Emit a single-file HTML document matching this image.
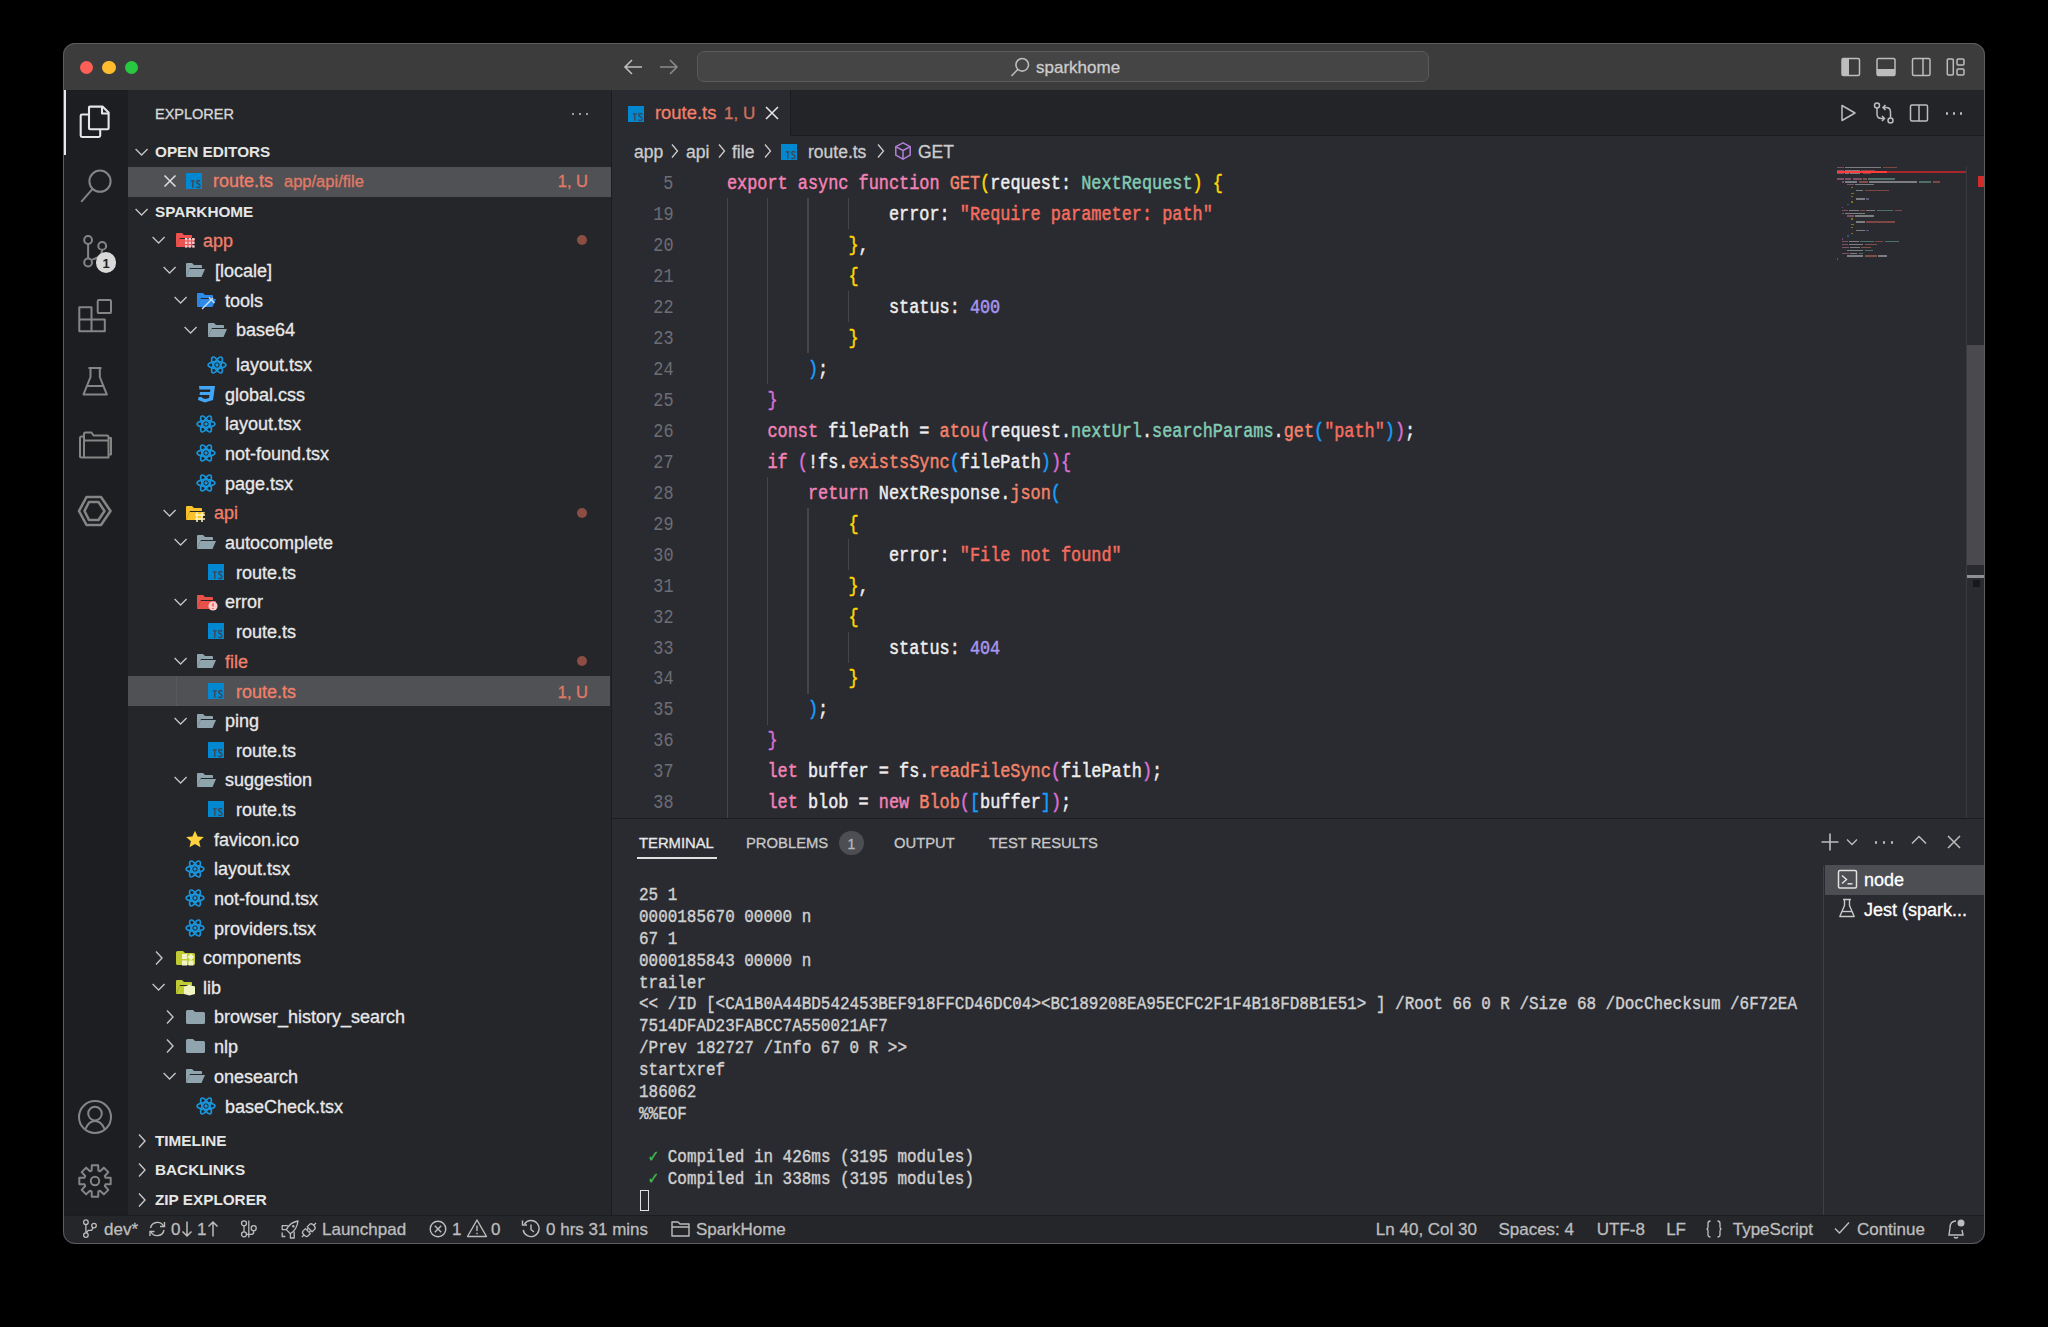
<!DOCTYPE html><html><head><meta charset="utf-8"><style>
html,body{margin:0;padding:0;background:#000;width:2048px;height:1327px;overflow:hidden;position:relative;}
*{box-sizing:border-box;}
</style></head><body>

<div style="position:absolute;left:63px;top:43px;width:1922px;height:1201px;border-radius:12px;background:#2a2b31;overflow:hidden;">
<div style="position:absolute;left:-63px;top:-43px;width:2048px;height:1327px;">
<div style="position:absolute;left:63px;top:43px;width:1922px;height:47px;background:#3c3c3c;"></div>
<div style="position:absolute;left:79.7px;top:60.5px;width:13.6px;height:13.6px;border-radius:50%;background:#fe5f57"></div>
<div style="position:absolute;left:102.2px;top:60.5px;width:13.6px;height:13.6px;border-radius:50%;background:#febc2e"></div>
<div style="position:absolute;left:124.7px;top:60.5px;width:13.6px;height:13.6px;border-radius:50%;background:#28c840"></div>
<div style="position:absolute;left:63px;top:90px;width:65px;height:1125px;background:#1d1e22;"></div>
<div style="position:absolute;left:128px;top:90px;width:483px;height:1125px;background:#25262a;"></div>
<div style="position:absolute;left:611px;top:90px;width:1px;height:1125px;background:#1b1c1f;"></div>
<div style="position:absolute;left:612px;top:90px;width:1373px;height:46px;background:#232428;"></div>
<div style="position:absolute;left:791px;top:135px;width:1194px;height:1px;background:#1b1c1f;"></div>
<div style="position:absolute;left:612px;top:90px;width:179px;height:46px;background:#2a2b31;"></div>
<div style="position:absolute;left:790px;top:90px;width:1px;height:46px;background:#1b1c1f;"></div>
<div style="position:absolute;left:612px;top:136px;width:1373px;height:682px;background:#2a2b31;"></div>
<div style="position:absolute;left:612px;top:818px;width:1373px;height:1px;background:#1b1c1f;"></div>
<div style="position:absolute;left:612px;top:819px;width:1373px;height:396px;background:#2a2b31;"></div>
<div style="position:absolute;left:63px;top:1215px;width:1922px;height:1px;background:#1b1c1f;"></div>
<div style="position:absolute;left:63px;top:1216px;width:1922px;height:28px;background:#25262a;"></div>
<div style="position:absolute;left:155px;top:107.23px;font:400 14.5px/14.5px 'Liberation Sans', sans-serif;color:#d8d8d8;white-space:pre;-webkit-text-stroke:0.3px currentColor;">EXPLORER</div>
<div style="position:absolute;left:571.7px;top:112.5px;width:2.6px;height:2.6px;background:#c5c5c5;border-radius:50%"></div>
<div style="position:absolute;left:578.7px;top:112.5px;width:2.6px;height:2.6px;background:#c5c5c5;border-radius:50%"></div>
<div style="position:absolute;left:585.7px;top:112.5px;width:2.6px;height:2.6px;background:#c5c5c5;border-radius:50%"></div>
<svg style="position:absolute;left:135px;top:146.7px;" width="15" height="10" viewBox="0 0 15 10"><path d="M0.6 2 L6.6 8 L12.6 2" fill="none" stroke="#c5c5c5" stroke-width="1.3"/></svg>
<div style="position:absolute;left:155px;top:143.85px;font:700 15.3px/15.3px 'Liberation Sans', sans-serif;color:#e6e6e6;white-space:pre;">OPEN EDITORS</div>
<div style="position:absolute;left:128px;top:167px;width:483px;height:29.5px;background:#505155;"></div>
<svg style="position:absolute;left:163px;top:174px;" width="14" height="14" viewBox="0 0 14 14"><path d="M1.5 1.5 L12.5 12.5 M12.5 1.5 L1.5 12.5" stroke="#e0e0e0" stroke-width="1.5"/></svg>
<svg style="position:absolute;left:186px;top:173.0px;" width="16" height="16" viewBox="0 0 16 16"><rect x="0" y="0" width="16" height="16" fill="#0288d1"/><g fill="none" stroke="#3f464f" stroke-width="1.35"><path d="M4.9 7.8 H8.7 M6.8 7.8 V14.7"/><path d="M14.2 8.4 Q12.9 7.2 11.5 7.7 Q10.1 8.4 11.1 9.9 L13.3 11.4 Q14.6 12.6 13.8 13.9 Q12.4 15.1 10.3 13.9"/></g></svg>
<div style="position:absolute;left:213px;top:171.76px;font:400 18px/18px 'Liberation Sans', sans-serif;color:#f0806a;white-space:pre;-webkit-text-stroke:0.3px currentColor;">route.ts</div>
<div style="position:absolute;left:284px;top:173.03px;font:400 16.5px/16.5px 'Liberation Sans', sans-serif;color:#e07a66;white-space:pre;-webkit-text-stroke:0.3px currentColor;">app/api/file</div>
<div style="position:absolute;right:1460px;top:173.03px;font:400 16.5px/16.5px 'Liberation Sans', sans-serif;color:#e07a66;white-space:pre;-webkit-text-stroke:0.3px currentColor;">1, U</div>
<svg style="position:absolute;left:135px;top:206.7px;" width="15" height="10" viewBox="0 0 15 10"><path d="M0.6 2 L6.6 8 L12.6 2" fill="none" stroke="#c5c5c5" stroke-width="1.3"/></svg>
<div style="position:absolute;left:155px;top:203.85px;font:700 15.3px/15.3px 'Liberation Sans', sans-serif;color:#e6e6e6;white-space:pre;">SPARKHOME</div>
<svg style="position:absolute;left:152px;top:235px;" width="15" height="10" viewBox="0 0 15 10"><path d="M0.6 2 L6.6 8 L12.6 2" fill="none" stroke="#c5c5c5" stroke-width="1.3"/></svg>
<svg style="position:absolute;left:175px;top:232px;" width="21" height="16" viewBox="0 0 21 16"><path d="M1 2 Q1 1 2 1 H7 L9 3 H16 Q17 3 17 4 V6 H5 L1 15 Z" fill="#ef5350"/><path d="M4.5 7 H20 L16.5 15 H1 Z" fill="#ef5350"/></svg>
<svg style="position:absolute;left:184px;top:237px;" width="12" height="11" viewBox="0 0 12 11"><g fill="#ffcdd2"><rect x="1.0" y="1.0" width="2.4" height="2.4"/><rect x="1.0" y="4.6" width="2.4" height="2.4"/><rect x="1.0" y="8.2" width="2.4" height="2.4"/><rect x="4.6" y="1.0" width="2.4" height="2.4"/><rect x="4.6" y="4.6" width="2.4" height="2.4"/><rect x="4.6" y="8.2" width="2.4" height="2.4"/><rect x="8.2" y="1.0" width="2.4" height="2.4"/><rect x="8.2" y="4.6" width="2.4" height="2.4"/><rect x="8.2" y="8.2" width="2.4" height="2.4"/></g></svg>
<div style="position:absolute;left:203px;top:231.56px;font:400 18px/18px 'Liberation Sans', sans-serif;color:#f0806a;white-space:pre;-webkit-text-stroke:0.3px currentColor;">app</div>
<div style="position:absolute;left:577px;top:235px;width:10px;height:10px;background:#8c4d43;border-radius:50%"></div>
<svg style="position:absolute;left:163px;top:265px;" width="15" height="10" viewBox="0 0 15 10"><path d="M0.6 2 L6.6 8 L12.6 2" fill="none" stroke="#c5c5c5" stroke-width="1.3"/></svg>
<svg style="position:absolute;left:185px;top:262px;" width="21" height="16" viewBox="0 0 21 16"><path d="M1 2 Q1 1 2 1 H7 L9 3 H16 Q17 3 17 4 V6 H5 L1 15 Z" fill="#90a4ae"/><path d="M4.5 7 H20 L16.5 15 H1 Z" fill="#90a4ae"/></svg>
<div style="position:absolute;left:215px;top:261.56px;font:400 18px/18px 'Liberation Sans', sans-serif;color:#e8e8e8;white-space:pre;-webkit-text-stroke:0.3px currentColor;">[locale]</div>
<svg style="position:absolute;left:174px;top:295px;" width="15" height="10" viewBox="0 0 15 10"><path d="M0.6 2 L6.6 8 L12.6 2" fill="none" stroke="#c5c5c5" stroke-width="1.3"/></svg>
<svg style="position:absolute;left:196px;top:292px;" width="21" height="16" viewBox="0 0 21 16"><path d="M1 2 Q1 1 2 1 H7 L9 3 H16 Q17 3 17 4 V6 H5 L1 15 Z" fill="#2d8ae8"/><path d="M4.5 7 H20 L16.5 15 H1 Z" fill="#2d8ae8"/></svg>
<svg style="position:absolute;left:200px;top:296px;" width="16" height="14" viewBox="0 0 16 14"><path d="M2 13 L13 2 M9 1.5 L14.5 7" stroke="#cfe3f5" stroke-width="1.4" fill="none"/></svg>
<div style="position:absolute;left:225px;top:291.56px;font:400 18px/18px 'Liberation Sans', sans-serif;color:#e8e8e8;white-space:pre;-webkit-text-stroke:0.3px currentColor;">tools</div>
<svg style="position:absolute;left:184px;top:324.5px;" width="15" height="10" viewBox="0 0 15 10"><path d="M0.6 2 L6.6 8 L12.6 2" fill="none" stroke="#c5c5c5" stroke-width="1.3"/></svg>
<svg style="position:absolute;left:207px;top:321.5px;" width="21" height="16" viewBox="0 0 21 16"><path d="M1 2 Q1 1 2 1 H7 L9 3 H16 Q17 3 17 4 V6 H5 L1 15 Z" fill="#90a4ae"/><path d="M4.5 7 H20 L16.5 15 H1 Z" fill="#90a4ae"/></svg>
<div style="position:absolute;left:236px;top:321.06px;font:400 18px/18px 'Liberation Sans', sans-serif;color:#e8e8e8;white-space:pre;-webkit-text-stroke:0.3px currentColor;">base64</div>
<svg style="position:absolute;left:207px;top:355.5px;" width="20" height="18" viewBox="0 0 20 18"><g fill="none" stroke="#1a95dc" stroke-width="1.7"><ellipse cx="10" cy="9" rx="9" ry="3.4"/><ellipse cx="10" cy="9" rx="9" ry="3.4" transform="rotate(60 10 9)"/><ellipse cx="10" cy="9" rx="9" ry="3.4" transform="rotate(120 10 9)"/></g><circle cx="10" cy="9" r="1.7" fill="#1a95dc"/></svg>
<div style="position:absolute;left:236px;top:356.06px;font:400 18px/18px 'Liberation Sans', sans-serif;color:#e8e8e8;white-space:pre;-webkit-text-stroke:0.3px currentColor;">layout.tsx</div>
<svg style="position:absolute;left:196px;top:385px;" width="20" height="18" viewBox="0 0 20 18"><path d="M3 1 H19 L17 15 L9 17.5 L2 15 L2.6 12 H6 L6 13 L9.5 14 L13 13 L13.5 10 H3.5 L4 7 H14 L14.4 4.5 H3.4 Z" fill="#42a5f5"/></svg>
<div style="position:absolute;left:225px;top:385.56px;font:400 18px/18px 'Liberation Sans', sans-serif;color:#e8e8e8;white-space:pre;-webkit-text-stroke:0.3px currentColor;">global.css</div>
<svg style="position:absolute;left:196px;top:414.5px;" width="20" height="18" viewBox="0 0 20 18"><g fill="none" stroke="#1a95dc" stroke-width="1.7"><ellipse cx="10" cy="9" rx="9" ry="3.4"/><ellipse cx="10" cy="9" rx="9" ry="3.4" transform="rotate(60 10 9)"/><ellipse cx="10" cy="9" rx="9" ry="3.4" transform="rotate(120 10 9)"/></g><circle cx="10" cy="9" r="1.7" fill="#1a95dc"/></svg>
<div style="position:absolute;left:225px;top:415.06px;font:400 18px/18px 'Liberation Sans', sans-serif;color:#e8e8e8;white-space:pre;-webkit-text-stroke:0.3px currentColor;">layout.tsx</div>
<svg style="position:absolute;left:196px;top:444px;" width="20" height="18" viewBox="0 0 20 18"><g fill="none" stroke="#1a95dc" stroke-width="1.7"><ellipse cx="10" cy="9" rx="9" ry="3.4"/><ellipse cx="10" cy="9" rx="9" ry="3.4" transform="rotate(60 10 9)"/><ellipse cx="10" cy="9" rx="9" ry="3.4" transform="rotate(120 10 9)"/></g><circle cx="10" cy="9" r="1.7" fill="#1a95dc"/></svg>
<div style="position:absolute;left:225px;top:444.56px;font:400 18px/18px 'Liberation Sans', sans-serif;color:#e8e8e8;white-space:pre;-webkit-text-stroke:0.3px currentColor;">not-found.tsx</div>
<svg style="position:absolute;left:196px;top:474px;" width="20" height="18" viewBox="0 0 20 18"><g fill="none" stroke="#1a95dc" stroke-width="1.7"><ellipse cx="10" cy="9" rx="9" ry="3.4"/><ellipse cx="10" cy="9" rx="9" ry="3.4" transform="rotate(60 10 9)"/><ellipse cx="10" cy="9" rx="9" ry="3.4" transform="rotate(120 10 9)"/></g><circle cx="10" cy="9" r="1.7" fill="#1a95dc"/></svg>
<div style="position:absolute;left:225px;top:474.56px;font:400 18px/18px 'Liberation Sans', sans-serif;color:#e8e8e8;white-space:pre;-webkit-text-stroke:0.3px currentColor;">page.tsx</div>
<svg style="position:absolute;left:163px;top:507.5px;" width="15" height="10" viewBox="0 0 15 10"><path d="M0.6 2 L6.6 8 L12.6 2" fill="none" stroke="#c5c5c5" stroke-width="1.3"/></svg>
<svg style="position:absolute;left:185px;top:504.5px;" width="21" height="16" viewBox="0 0 21 16"><path d="M1 2 Q1 1 2 1 H7 L9 3 H16 Q17 3 17 4 V6 H5 L1 15 Z" fill="#f9c22b"/><path d="M4.5 7 H20 L16.5 15 H1 Z" fill="#f9c22b"/></svg>
<svg style="position:absolute;left:194px;top:510.5px;" width="12" height="12" viewBox="0 0 12 12"><path d="M3 1 V11 M8 1 V11 M1 4 H11 M1 8 H11" stroke="#fff3c4" stroke-width="1.5"/></svg>
<div style="position:absolute;left:214px;top:504.06px;font:400 18px/18px 'Liberation Sans', sans-serif;color:#f0806a;white-space:pre;-webkit-text-stroke:0.3px currentColor;">api</div>
<div style="position:absolute;left:577px;top:507.5px;width:10px;height:10px;background:#8c4d43;border-radius:50%"></div>
<svg style="position:absolute;left:174px;top:537px;" width="15" height="10" viewBox="0 0 15 10"><path d="M0.6 2 L6.6 8 L12.6 2" fill="none" stroke="#c5c5c5" stroke-width="1.3"/></svg>
<svg style="position:absolute;left:196px;top:534px;" width="21" height="16" viewBox="0 0 21 16"><path d="M1 2 Q1 1 2 1 H7 L9 3 H16 Q17 3 17 4 V6 H5 L1 15 Z" fill="#90a4ae"/><path d="M4.5 7 H20 L16.5 15 H1 Z" fill="#90a4ae"/></svg>
<div style="position:absolute;left:225px;top:533.56px;font:400 18px/18px 'Liberation Sans', sans-serif;color:#e8e8e8;white-space:pre;-webkit-text-stroke:0.3px currentColor;">autocomplete</div>
<svg style="position:absolute;left:208px;top:564.0px;" width="16" height="16" viewBox="0 0 16 16"><rect x="0" y="0" width="16" height="16" fill="#0288d1"/><g fill="none" stroke="#3f464f" stroke-width="1.35"><path d="M4.9 7.8 H8.7 M6.8 7.8 V14.7"/><path d="M14.2 8.4 Q12.9 7.2 11.5 7.7 Q10.1 8.4 11.1 9.9 L13.3 11.4 Q14.6 12.6 13.8 13.9 Q12.4 15.1 10.3 13.9"/></g></svg>
<div style="position:absolute;left:236px;top:563.56px;font:400 18px/18px 'Liberation Sans', sans-serif;color:#e8e8e8;white-space:pre;-webkit-text-stroke:0.3px currentColor;">route.ts</div>
<svg style="position:absolute;left:174px;top:596.5px;" width="15" height="10" viewBox="0 0 15 10"><path d="M0.6 2 L6.6 8 L12.6 2" fill="none" stroke="#c5c5c5" stroke-width="1.3"/></svg>
<svg style="position:absolute;left:196px;top:593.5px;" width="21" height="16" viewBox="0 0 21 16"><path d="M1 2 Q1 1 2 1 H7 L9 3 H16 Q17 3 17 4 V6 H5 L1 15 Z" fill="#e8504a"/><path d="M4.5 7 H20 L16.5 15 H1 Z" fill="#e8504a"/></svg>
<svg style="position:absolute;left:208px;top:600.5px;" width="10" height="10" viewBox="0 0 10 10"><circle cx="5" cy="5" r="4.6" fill="#fbcaca"/><path d="M5 2.3 V5.6 M5 7 V8" stroke="#e8504a" stroke-width="1.4"/></svg>
<div style="position:absolute;left:225px;top:593.06px;font:400 18px/18px 'Liberation Sans', sans-serif;color:#e8e8e8;white-space:pre;-webkit-text-stroke:0.3px currentColor;">error</div>
<svg style="position:absolute;left:208px;top:623.0px;" width="16" height="16" viewBox="0 0 16 16"><rect x="0" y="0" width="16" height="16" fill="#0288d1"/><g fill="none" stroke="#3f464f" stroke-width="1.35"><path d="M4.9 7.8 H8.7 M6.8 7.8 V14.7"/><path d="M14.2 8.4 Q12.9 7.2 11.5 7.7 Q10.1 8.4 11.1 9.9 L13.3 11.4 Q14.6 12.6 13.8 13.9 Q12.4 15.1 10.3 13.9"/></g></svg>
<div style="position:absolute;left:236px;top:622.56px;font:400 18px/18px 'Liberation Sans', sans-serif;color:#e8e8e8;white-space:pre;-webkit-text-stroke:0.3px currentColor;">route.ts</div>
<svg style="position:absolute;left:174px;top:656px;" width="15" height="10" viewBox="0 0 15 10"><path d="M0.6 2 L6.6 8 L12.6 2" fill="none" stroke="#c5c5c5" stroke-width="1.3"/></svg>
<svg style="position:absolute;left:196px;top:653px;" width="21" height="16" viewBox="0 0 21 16"><path d="M1 2 Q1 1 2 1 H7 L9 3 H16 Q17 3 17 4 V6 H5 L1 15 Z" fill="#90a4ae"/><path d="M4.5 7 H20 L16.5 15 H1 Z" fill="#90a4ae"/></svg>
<div style="position:absolute;left:225px;top:652.56px;font:400 18px/18px 'Liberation Sans', sans-serif;color:#f0806a;white-space:pre;-webkit-text-stroke:0.3px currentColor;">file</div>
<div style="position:absolute;left:577px;top:656px;width:10px;height:10px;background:#8c4d43;border-radius:50%"></div>
<div style="position:absolute;left:128px;top:676px;width:482px;height:29.5px;background:#505155;"></div>
<div style="position:absolute;left:176px;top:676px;width:1px;height:29.5px;background:#58595d;"></div>
<svg style="position:absolute;left:208px;top:683.0px;" width="16" height="16" viewBox="0 0 16 16"><rect x="0" y="0" width="16" height="16" fill="#0288d1"/><g fill="none" stroke="#3f464f" stroke-width="1.35"><path d="M4.9 7.8 H8.7 M6.8 7.8 V14.7"/><path d="M14.2 8.4 Q12.9 7.2 11.5 7.7 Q10.1 8.4 11.1 9.9 L13.3 11.4 Q14.6 12.6 13.8 13.9 Q12.4 15.1 10.3 13.9"/></g></svg>
<div style="position:absolute;left:236px;top:682.56px;font:400 18px/18px 'Liberation Sans', sans-serif;color:#f0806a;white-space:pre;-webkit-text-stroke:0.3px currentColor;">route.ts</div>
<div style="position:absolute;right:1460px;top:683.83px;font:400 16.5px/16.5px 'Liberation Sans', sans-serif;color:#e07a66;white-space:pre;-webkit-text-stroke:0.3px currentColor;">1, U</div>
<svg style="position:absolute;left:174px;top:715.5px;" width="15" height="10" viewBox="0 0 15 10"><path d="M0.6 2 L6.6 8 L12.6 2" fill="none" stroke="#c5c5c5" stroke-width="1.3"/></svg>
<svg style="position:absolute;left:196px;top:712.5px;" width="21" height="16" viewBox="0 0 21 16"><path d="M1 2 Q1 1 2 1 H7 L9 3 H16 Q17 3 17 4 V6 H5 L1 15 Z" fill="#90a4ae"/><path d="M4.5 7 H20 L16.5 15 H1 Z" fill="#90a4ae"/></svg>
<div style="position:absolute;left:225px;top:712.06px;font:400 18px/18px 'Liberation Sans', sans-serif;color:#e8e8e8;white-space:pre;-webkit-text-stroke:0.3px currentColor;">ping</div>
<svg style="position:absolute;left:208px;top:742.0px;" width="16" height="16" viewBox="0 0 16 16"><rect x="0" y="0" width="16" height="16" fill="#0288d1"/><g fill="none" stroke="#3f464f" stroke-width="1.35"><path d="M4.9 7.8 H8.7 M6.8 7.8 V14.7"/><path d="M14.2 8.4 Q12.9 7.2 11.5 7.7 Q10.1 8.4 11.1 9.9 L13.3 11.4 Q14.6 12.6 13.8 13.9 Q12.4 15.1 10.3 13.9"/></g></svg>
<div style="position:absolute;left:236px;top:741.56px;font:400 18px/18px 'Liberation Sans', sans-serif;color:#e8e8e8;white-space:pre;-webkit-text-stroke:0.3px currentColor;">route.ts</div>
<svg style="position:absolute;left:174px;top:774.5px;" width="15" height="10" viewBox="0 0 15 10"><path d="M0.6 2 L6.6 8 L12.6 2" fill="none" stroke="#c5c5c5" stroke-width="1.3"/></svg>
<svg style="position:absolute;left:196px;top:771.5px;" width="21" height="16" viewBox="0 0 21 16"><path d="M1 2 Q1 1 2 1 H7 L9 3 H16 Q17 3 17 4 V6 H5 L1 15 Z" fill="#90a4ae"/><path d="M4.5 7 H20 L16.5 15 H1 Z" fill="#90a4ae"/></svg>
<div style="position:absolute;left:225px;top:771.06px;font:400 18px/18px 'Liberation Sans', sans-serif;color:#e8e8e8;white-space:pre;-webkit-text-stroke:0.3px currentColor;">suggestion</div>
<svg style="position:absolute;left:208px;top:801.0px;" width="16" height="16" viewBox="0 0 16 16"><rect x="0" y="0" width="16" height="16" fill="#0288d1"/><g fill="none" stroke="#3f464f" stroke-width="1.35"><path d="M4.9 7.8 H8.7 M6.8 7.8 V14.7"/><path d="M14.2 8.4 Q12.9 7.2 11.5 7.7 Q10.1 8.4 11.1 9.9 L13.3 11.4 Q14.6 12.6 13.8 13.9 Q12.4 15.1 10.3 13.9"/></g></svg>
<div style="position:absolute;left:236px;top:800.56px;font:400 18px/18px 'Liberation Sans', sans-serif;color:#e8e8e8;white-space:pre;-webkit-text-stroke:0.3px currentColor;">route.ts</div>
<svg style="position:absolute;left:185px;top:830px;" width="20" height="18" viewBox="0 0 20 18"><path d="M10 0.8 L12.6 6.5 L18.8 7.1 L14.1 11.2 L15.5 17.3 L10 14.1 L4.5 17.3 L5.9 11.2 L1.2 7.1 L7.4 6.5 Z" fill="#fdd23e"/></svg>
<div style="position:absolute;left:214px;top:830.56px;font:400 18px/18px 'Liberation Sans', sans-serif;color:#e8e8e8;white-space:pre;-webkit-text-stroke:0.3px currentColor;">favicon.ico</div>
<svg style="position:absolute;left:185px;top:859.5px;" width="20" height="18" viewBox="0 0 20 18"><g fill="none" stroke="#1a95dc" stroke-width="1.7"><ellipse cx="10" cy="9" rx="9" ry="3.4"/><ellipse cx="10" cy="9" rx="9" ry="3.4" transform="rotate(60 10 9)"/><ellipse cx="10" cy="9" rx="9" ry="3.4" transform="rotate(120 10 9)"/></g><circle cx="10" cy="9" r="1.7" fill="#1a95dc"/></svg>
<div style="position:absolute;left:214px;top:860.06px;font:400 18px/18px 'Liberation Sans', sans-serif;color:#e8e8e8;white-space:pre;-webkit-text-stroke:0.3px currentColor;">layout.tsx</div>
<svg style="position:absolute;left:185px;top:889px;" width="20" height="18" viewBox="0 0 20 18"><g fill="none" stroke="#1a95dc" stroke-width="1.7"><ellipse cx="10" cy="9" rx="9" ry="3.4"/><ellipse cx="10" cy="9" rx="9" ry="3.4" transform="rotate(60 10 9)"/><ellipse cx="10" cy="9" rx="9" ry="3.4" transform="rotate(120 10 9)"/></g><circle cx="10" cy="9" r="1.7" fill="#1a95dc"/></svg>
<div style="position:absolute;left:214px;top:889.56px;font:400 18px/18px 'Liberation Sans', sans-serif;color:#e8e8e8;white-space:pre;-webkit-text-stroke:0.3px currentColor;">not-found.tsx</div>
<svg style="position:absolute;left:185px;top:919px;" width="20" height="18" viewBox="0 0 20 18"><g fill="none" stroke="#1a95dc" stroke-width="1.7"><ellipse cx="10" cy="9" rx="9" ry="3.4"/><ellipse cx="10" cy="9" rx="9" ry="3.4" transform="rotate(60 10 9)"/><ellipse cx="10" cy="9" rx="9" ry="3.4" transform="rotate(120 10 9)"/></g><circle cx="10" cy="9" r="1.7" fill="#1a95dc"/></svg>
<div style="position:absolute;left:214px;top:919.56px;font:400 18px/18px 'Liberation Sans', sans-serif;color:#e8e8e8;white-space:pre;-webkit-text-stroke:0.3px currentColor;">providers.tsx</div>
<svg style="position:absolute;left:154px;top:949.5px;" width="10" height="16" viewBox="0 0 10 16"><path d="M2 1.5 L8 8 L2 14.5" fill="none" stroke="#c5c5c5" stroke-width="1.4"/></svg>
<svg style="position:absolute;left:175px;top:949.5px;" width="21" height="16" viewBox="0 0 21 16"><path d="M1 2.5 Q1 1 2.5 1 H8 L10 3 H18.5 Q20 3 20 4.5 V13.5 Q20 15 18.5 15 H2.5 Q1 15 1 13.5 Z" fill="#c0ca33"/></svg>
<svg style="position:absolute;left:181px;top:952.5px;" width="15" height="14" viewBox="0 0 15 14"><rect x="1" y="1" width="5" height="5" fill="#f0f4c3"/><rect x="1" y="7.5" width="5" height="5" fill="#f0f4c3"/><rect x="7.5" y="7.5" width="5" height="5" fill="#f0f4c3"/><path d="M10 0.5 L13.5 4 L10 7.5 L6.5 4 Z" fill="#f0f4c3"/></svg>
<div style="position:absolute;left:203px;top:949.06px;font:400 18px/18px 'Liberation Sans', sans-serif;color:#e8e8e8;white-space:pre;-webkit-text-stroke:0.3px currentColor;">components</div>
<svg style="position:absolute;left:152px;top:982px;" width="15" height="10" viewBox="0 0 15 10"><path d="M0.6 2 L6.6 8 L12.6 2" fill="none" stroke="#c5c5c5" stroke-width="1.3"/></svg>
<svg style="position:absolute;left:175px;top:979px;" width="21" height="16" viewBox="0 0 21 16"><path d="M1 2 Q1 1 2 1 H7 L9 3 H16 Q17 3 17 4 V6 H5 L1 15 Z" fill="#c0ca33"/><path d="M4.5 7 H20 L16.5 15 H1 Z" fill="#c0ca33"/></svg>
<svg style="position:absolute;left:183px;top:983px;" width="13" height="13" viewBox="0 0 13 13"><path d="M1 4 L6.5 1.5 L12 4 V11 L6.5 12.5 L1 11 Z" fill="#f0f4c3"/></svg>
<div style="position:absolute;left:203px;top:978.56px;font:400 18px/18px 'Liberation Sans', sans-serif;color:#e8e8e8;white-space:pre;-webkit-text-stroke:0.3px currentColor;">lib</div>
<svg style="position:absolute;left:165px;top:1008.5px;" width="10" height="16" viewBox="0 0 10 16"><path d="M2 1.5 L8 8 L2 14.5" fill="none" stroke="#c5c5c5" stroke-width="1.4"/></svg>
<svg style="position:absolute;left:185px;top:1008.5px;" width="21" height="16" viewBox="0 0 21 16"><path d="M1 2.5 Q1 1 2.5 1 H8 L10 3 H18.5 Q20 3 20 4.5 V13.5 Q20 15 18.5 15 H2.5 Q1 15 1 13.5 Z" fill="#90a4ae"/></svg>
<div style="position:absolute;left:214px;top:1008.06px;font:400 18px/18px 'Liberation Sans', sans-serif;color:#e8e8e8;white-space:pre;-webkit-text-stroke:0.3px currentColor;">browser_history_search</div>
<svg style="position:absolute;left:165px;top:1038px;" width="10" height="16" viewBox="0 0 10 16"><path d="M2 1.5 L8 8 L2 14.5" fill="none" stroke="#c5c5c5" stroke-width="1.4"/></svg>
<svg style="position:absolute;left:185px;top:1038px;" width="21" height="16" viewBox="0 0 21 16"><path d="M1 2.5 Q1 1 2.5 1 H8 L10 3 H18.5 Q20 3 20 4.5 V13.5 Q20 15 18.5 15 H2.5 Q1 15 1 13.5 Z" fill="#90a4ae"/></svg>
<div style="position:absolute;left:214px;top:1037.56px;font:400 18px/18px 'Liberation Sans', sans-serif;color:#e8e8e8;white-space:pre;-webkit-text-stroke:0.3px currentColor;">nlp</div>
<svg style="position:absolute;left:163px;top:1071px;" width="15" height="10" viewBox="0 0 15 10"><path d="M0.6 2 L6.6 8 L12.6 2" fill="none" stroke="#c5c5c5" stroke-width="1.3"/></svg>
<svg style="position:absolute;left:185px;top:1068px;" width="21" height="16" viewBox="0 0 21 16"><path d="M1 2 Q1 1 2 1 H7 L9 3 H16 Q17 3 17 4 V6 H5 L1 15 Z" fill="#90a4ae"/><path d="M4.5 7 H20 L16.5 15 H1 Z" fill="#90a4ae"/></svg>
<div style="position:absolute;left:214px;top:1067.56px;font:400 18px/18px 'Liberation Sans', sans-serif;color:#e8e8e8;white-space:pre;-webkit-text-stroke:0.3px currentColor;">onesearch</div>
<svg style="position:absolute;left:196px;top:1097px;" width="20" height="18" viewBox="0 0 20 18"><g fill="none" stroke="#1a95dc" stroke-width="1.7"><ellipse cx="10" cy="9" rx="9" ry="3.4"/><ellipse cx="10" cy="9" rx="9" ry="3.4" transform="rotate(60 10 9)"/><ellipse cx="10" cy="9" rx="9" ry="3.4" transform="rotate(120 10 9)"/></g><circle cx="10" cy="9" r="1.7" fill="#1a95dc"/></svg>
<div style="position:absolute;left:225px;top:1097.56px;font:400 18px/18px 'Liberation Sans', sans-serif;color:#e8e8e8;white-space:pre;-webkit-text-stroke:0.3px currentColor;">baseCheck.tsx</div>
<svg style="position:absolute;left:137px;top:1132.7px;" width="10" height="16" viewBox="0 0 10 16"><path d="M2 1.5 L8 8 L2 14.5" fill="none" stroke="#c5c5c5" stroke-width="1.4"/></svg>
<div style="position:absolute;left:155px;top:1132.85px;font:700 15.3px/15.3px 'Liberation Sans', sans-serif;color:#e6e6e6;white-space:pre;">TIMELINE</div>
<svg style="position:absolute;left:137px;top:1162.2px;" width="10" height="16" viewBox="0 0 10 16"><path d="M2 1.5 L8 8 L2 14.5" fill="none" stroke="#c5c5c5" stroke-width="1.4"/></svg>
<div style="position:absolute;left:155px;top:1162.35px;font:700 15.3px/15.3px 'Liberation Sans', sans-serif;color:#e6e6e6;white-space:pre;">BACKLINKS</div>
<svg style="position:absolute;left:137px;top:1191.7px;" width="10" height="16" viewBox="0 0 10 16"><path d="M2 1.5 L8 8 L2 14.5" fill="none" stroke="#c5c5c5" stroke-width="1.4"/></svg>
<div style="position:absolute;left:155px;top:1191.85px;font:700 15.3px/15.3px 'Liberation Sans', sans-serif;color:#e6e6e6;white-space:pre;">ZIP EXPLORER</div>
<div style="position:absolute;left:63px;top:90px;width:2.5px;height:64.5px;background:#e8e8e8;"></div>
<svg style="position:absolute;left:76px;top:102px;" width="40" height="40" viewBox="0 0 40 40"><g fill="none" stroke="#e6e6e6" stroke-width="2.1" stroke-linejoin="round"><path d="M12.5 12.5 H6 Q4.7 12.5 4.7 13.8 V33.6 Q4.7 35 6 35 H22.8 Q24.2 35 24.2 33.6 V27.5"/><path d="M13 5.6 Q13 4.6 14 4.6 H26.5 L32.6 10.6 V26.2 Q32.6 27.2 31.6 27.2 H14 Q13 27.2 13 26.2 Z"/><path d="M26 5 V11.5 H32.4" /></g></svg>
<svg style="position:absolute;left:75px;top:165px;" width="40" height="40" viewBox="0 0 40 40"><g fill="none" stroke="#858585" stroke-width="2"><circle cx="25" cy="16.2" r="10.6"/><path d="M17.6 23.8 L6.2 36.8"/></g></svg>
<svg style="position:absolute;left:75px;top:230px;" width="40" height="40" viewBox="0 0 40 40"><g fill="none" stroke="#858585" stroke-width="2"><circle cx="13.1" cy="10" r="3.9"/><circle cx="13.1" cy="32.5" r="3.9"/><circle cx="27.2" cy="15.9" r="3.9"/><path d="M13.1 13.9 V28.6"/><path d="M27.2 19.8 Q27 27 17 29.6"/></g></svg>
<div style="position:absolute;left:96px;top:252.3px;width:20.4px;height:20.4px;border-radius:50%;background:#d9d9d9;"></div>
<div style="position:absolute;left:-393.8px;width:1000px;text-align:center;top:257.20px;font:700 13px/13px 'Liberation Sans', sans-serif;color:#1f2023;white-space:pre;">1</div>
<svg style="position:absolute;left:75px;top:295px;" width="40" height="40" viewBox="0 0 40 40"><g fill="none" stroke="#858585" stroke-width="2" stroke-linejoin="round"><path d="M4.3 12.2 H16.5 V24.4 H29.8 V36.2 H4.3 Z"/><path d="M4.3 24.4 H16.5 V36.2"/><rect x="22.7" y="5" width="13.3" height="13.1" rx="1.2"/></g></svg>
<svg style="position:absolute;left:75px;top:361px;" width="40" height="40" viewBox="0 0 40 40"><g fill="none" stroke="#858585" stroke-width="2" stroke-linejoin="round"><path d="M13.5 7 H26.5 M15.5 7 V16 L8.5 33.4 H31.8 L24.8 16 V7"/><path d="M11.5 25 H28.8"/></g></svg>
<svg style="position:absolute;left:75px;top:426px;" width="40" height="40" viewBox="0 0 40 40"><g fill="none" stroke="#858585" stroke-width="2" stroke-linejoin="round"><path d="M5 31 V12 Q5 10.5 6.5 10.5 H9"/><path d="M9 31.5 V8 Q9 6.5 10.5 6.5 H16.5 L18.5 9.5 H32 Q33.5 9.5 33.5 11 V31.5 H6.5 Q5 31.5 5 30"/><path d="M9 14.5 H33.5"/><path d="M33.5 12 H36 V28.5 H33.5"/></g></svg>
<svg style="position:absolute;left:75px;top:491px;" width="40" height="40" viewBox="0 0 40 40"><g fill="none" stroke="#858585" stroke-width="2.6" stroke-linejoin="round"><path d="M11.5 6 H26 L35.5 20 L26 34 H11.5 L4 20 Z"/><path d="M14 11 H23.5 L29.5 20 L23.5 29 H14 L9.5 20 Z"/></g></svg>
<svg style="position:absolute;left:75px;top:1097px;" width="40" height="40" viewBox="0 0 40 40"><g fill="none" stroke="#858585" stroke-width="2"><circle cx="20" cy="20" r="16"/><circle cx="20" cy="16.6" r="6.8"/><path d="M10.5 31.8 Q14 24 20 24 Q26 24 29.5 31.8"/></g></svg>
<svg style="position:absolute;left:75px;top:1161px;" width="40" height="40" viewBox="0 0 40 40"><g fill="none" stroke="#858585" stroke-width="2" stroke-linejoin="round"><polygon points="16.82,4.32 23.18,4.32 23.36,9.52 25.03,10.22 28.84,6.66 33.34,11.16 29.78,14.97 30.48,16.64 35.68,16.82 35.68,23.18 30.48,23.36 29.78,25.03 33.34,28.84 28.84,33.34 25.03,29.78 23.36,30.48 23.18,35.68 16.82,35.68 16.64,30.48 14.97,29.78 11.16,33.34 6.66,28.84 10.22,25.03 9.52,23.36 4.32,23.18 4.32,16.82 9.52,16.64 10.22,14.97 6.66,11.16 11.16,6.66 14.97,10.22 16.64,9.52"/><circle cx="20" cy="20" r="4.2"/></g></svg>
<svg style="position:absolute;left:622px;top:58px;" width="22" height="18" viewBox="0 0 22 18"><path d="M20 9 H3 M10 2 L3 9 L10 16" fill="none" stroke="#bdbdbd" stroke-width="1.6"/></svg>
<svg style="position:absolute;left:658px;top:58px;" width="22" height="18" viewBox="0 0 22 18"><path d="M2 9 H19 M12 2 L19 9 L12 16" fill="none" stroke="#8a8a8a" stroke-width="1.6"/></svg>
<div style="position:absolute;left:697px;top:50.5px;width:732px;height:31px;border-radius:7px;background:#454545;border:1px solid #5a5a5a;"></div>
<svg style="position:absolute;left:1009px;top:55.5px;" width="22" height="22" viewBox="0 0 22 22"><g fill="none" stroke="#bdbdbd" stroke-width="1.6"><circle cx="13.2" cy="8.8" r="6.3"/><path d="M9 13.2 L2.5 20"/></g></svg>
<div style="position:absolute;left:1036px;top:58.61px;font:400 17px/17px 'Liberation Sans', sans-serif;color:#cccccc;white-space:pre;-webkit-text-stroke:0.3px currentColor;">sparkhome</div>
<svg style="position:absolute;left:1840px;top:56px;" width="22" height="22" viewBox="0 0 22 22"><rect x="2" y="2.5" width="17.5" height="17" rx="1.5" fill="none" stroke="#bdbdbd" stroke-width="1.5"/><rect x="2" y="2.5" width="7" height="17" fill="#bdbdbd"/></svg>
<svg style="position:absolute;left:1875px;top:56px;" width="22" height="22" viewBox="0 0 22 22"><rect x="2" y="2.5" width="18" height="17" rx="1.5" fill="none" stroke="#bdbdbd" stroke-width="1.5"/><rect x="2" y="13" width="18" height="6.5" fill="#bdbdbd"/></svg>
<svg style="position:absolute;left:1910px;top:56px;" width="22" height="22" viewBox="0 0 22 22"><rect x="2.5" y="2.5" width="17.5" height="17" rx="1.5" fill="none" stroke="#bdbdbd" stroke-width="1.5"/><path d="M13 2.5 V19.5" stroke="#bdbdbd" stroke-width="1.5"/></svg>
<svg style="position:absolute;left:1945px;top:56px;" width="22" height="22" viewBox="0 0 22 22"><g fill="none" stroke="#bdbdbd" stroke-width="1.5"><rect x="2.3" y="3" width="6" height="16" rx="1"/><rect x="12" y="3" width="7" height="6" rx="1.2"/><rect x="12" y="13" width="7" height="6" rx="1.2"/></g></svg>
<svg style="position:absolute;left:628px;top:105.5px;" width="16" height="16" viewBox="0 0 16 16"><rect x="0" y="0" width="16" height="16" fill="#0288d1"/><g fill="none" stroke="#3f464f" stroke-width="1.35"><path d="M4.9 7.8 H8.7 M6.8 7.8 V14.7"/><path d="M14.2 8.4 Q12.9 7.2 11.5 7.7 Q10.1 8.4 11.1 9.9 L13.3 11.4 Q14.6 12.6 13.8 13.9 Q12.4 15.1 10.3 13.9"/></g></svg>
<div style="position:absolute;left:655px;top:103.92px;font:400 18.4px/18.4px 'Liberation Sans', sans-serif;color:#f0806a;white-space:pre;-webkit-text-stroke:0.3px currentColor;">route.ts</div>
<div style="position:absolute;left:724px;top:105.11px;font:400 17px/17px 'Liberation Sans', sans-serif;color:#d0725f;white-space:pre;-webkit-text-stroke:0.3px currentColor;">1, U</div>
<svg style="position:absolute;left:764px;top:105px;" width="16" height="16" viewBox="0 0 16 16"><path d="M2 2 L14 14 M14 2 L2 14" stroke="#e8e8e8" stroke-width="1.5"/></svg>
<svg style="position:absolute;left:1838px;top:103px;" width="20" height="20" viewBox="0 0 20 20"><path d="M4 2.5 L17 10 L4 17.5 Z" fill="none" stroke="#bdbdbd" stroke-width="1.5" stroke-linejoin="round"/></svg>
<svg style="position:absolute;left:1872px;top:101px;" width="24" height="24" viewBox="0 0 24 24"><g fill="none" stroke="#bdbdbd" stroke-width="1.5"><circle cx="5" cy="4.5" r="2.5"/><circle cx="18.5" cy="19.5" r="2.5"/><path d="M5 7 V13 Q5 17.5 9.5 17.5 H12 M10 15 L12.5 17.5 L10 20"/><path d="M18.5 17 V11 Q18.5 6.5 14 6.5 H11.5 M13.5 4 L11 6.5 L13.5 9"/></g></svg>
<svg style="position:absolute;left:1908px;top:103px;" width="22" height="20" viewBox="0 0 22 20"><g fill="none" stroke="#bdbdbd" stroke-width="1.5"><rect x="2.5" y="2" width="17" height="16" rx="1.5"/><path d="M11 2 V18"/></g></svg>
<div style="position:absolute;left:1945.7px;top:112px;width:2.6px;height:2.6px;background:#bdbdbd;border-radius:50%"></div>
<div style="position:absolute;left:1952.7px;top:112px;width:2.6px;height:2.6px;background:#bdbdbd;border-radius:50%"></div>
<div style="position:absolute;left:1959.7px;top:112px;width:2.6px;height:2.6px;background:#bdbdbd;border-radius:50%"></div>
<div style="position:absolute;left:634px;top:143.59px;font:400 17.5px/17.5px 'Liberation Sans', sans-serif;color:#cccccc;white-space:pre;-webkit-text-stroke:0.3px currentColor;">app</div>
<svg style="position:absolute;left:670px;top:143px;" width="10" height="16" viewBox="0 0 10 16"><path d="M2 1.5 L7.5 8 L2 14.5" fill="none" stroke="#cccccc" stroke-width="1.3"/></svg>
<div style="position:absolute;left:686px;top:143.59px;font:400 17.5px/17.5px 'Liberation Sans', sans-serif;color:#cccccc;white-space:pre;-webkit-text-stroke:0.3px currentColor;">api</div>
<svg style="position:absolute;left:717px;top:143px;" width="10" height="16" viewBox="0 0 10 16"><path d="M2 1.5 L7.5 8 L2 14.5" fill="none" stroke="#cccccc" stroke-width="1.3"/></svg>
<div style="position:absolute;left:732px;top:143.59px;font:400 17.5px/17.5px 'Liberation Sans', sans-serif;color:#cccccc;white-space:pre;-webkit-text-stroke:0.3px currentColor;">file</div>
<svg style="position:absolute;left:763px;top:143px;" width="10" height="16" viewBox="0 0 10 16"><path d="M2 1.5 L7.5 8 L2 14.5" fill="none" stroke="#cccccc" stroke-width="1.3"/></svg>
<svg style="position:absolute;left:781px;top:143.5px;" width="16" height="16" viewBox="0 0 16 16"><rect x="0" y="0" width="16" height="16" fill="#0288d1"/><g fill="none" stroke="#3f464f" stroke-width="1.35"><path d="M4.9 7.8 H8.7 M6.8 7.8 V14.7"/><path d="M14.2 8.4 Q12.9 7.2 11.5 7.7 Q10.1 8.4 11.1 9.9 L13.3 11.4 Q14.6 12.6 13.8 13.9 Q12.4 15.1 10.3 13.9"/></g></svg>
<div style="position:absolute;left:808px;top:143.59px;font:400 17.5px/17.5px 'Liberation Sans', sans-serif;color:#cccccc;white-space:pre;-webkit-text-stroke:0.3px currentColor;">route.ts</div>
<svg style="position:absolute;left:876px;top:143px;" width="10" height="16" viewBox="0 0 10 16"><path d="M2 1.5 L7.5 8 L2 14.5" fill="none" stroke="#cccccc" stroke-width="1.3"/></svg>
<svg style="position:absolute;left:893px;top:141px;" width="20" height="20" viewBox="0 0 20 20"><g fill="none" stroke="#b180d7" stroke-width="1.5" stroke-linejoin="round"><path d="M10 1.8 L17.2 5.6 V14.2 L10 18.2 L2.8 14.2 V5.6 Z"/><path d="M2.8 5.6 L10 9.5 L17.2 5.6 M10 9.5 V18.2"/></g></svg>
<div style="position:absolute;left:918px;top:143.59px;font:400 17.5px/17.5px 'Liberation Sans', sans-serif;color:#cccccc;white-space:pre;-webkit-text-stroke:0.3px currentColor;">GET</div>
<div style="position:absolute;left:726.5px;top:198.475px;width:1.3px;height:619.525px;background:#44454b;"></div>
<div style="position:absolute;left:766.98px;top:198.475px;width:1.3px;height:185.70000000000002px;background:#44454b;"></div>
<div style="position:absolute;left:766.98px;top:477.025px;width:1.3px;height:247.60000000000002px;background:#44454b;"></div>
<div style="position:absolute;left:807.46px;top:198.475px;width:1.3px;height:154.75000000000003px;background:#44454b;"></div>
<div style="position:absolute;left:807.46px;top:507.975px;width:1.3px;height:185.70000000000005px;background:#44454b;"></div>
<div style="position:absolute;left:847.94px;top:198.475px;width:1.3px;height:30.94999999999999px;background:#44454b;"></div>
<div style="position:absolute;left:847.94px;top:291.325px;width:1.3px;height:30.950000000000045px;background:#44454b;"></div>
<div style="position:absolute;left:847.94px;top:538.925px;width:1.3px;height:30.950000000000045px;background:#44454b;"></div>
<div style="position:absolute;left:847.94px;top:631.775px;width:1.3px;height:30.950000000000045px;background:#44454b;"></div>
<div style="position:absolute;right:1374.5px;top:174.29px;font:400 20.5px/20.5px 'Liberation Mono', monospace;white-space:pre;transform:scaleX(0.8226);transform-origin:100% 0;color:#6c6e74">5</div>
<div style="position:absolute;left:726.5px;top:174.29px;font:400 20.5px/20.5px 'Liberation Mono', monospace;white-space:pre;transform:scaleX(0.8226);transform-origin:0 0;color:#eeeeef;-webkit-text-stroke:0.5px currentColor"><span style="color:#f383b6">export</span><span style="color:#eeeeef"> </span><span style="color:#f383b6">async</span><span style="color:#eeeeef"> </span><span style="color:#f383b6">function</span><span style="color:#eeeeef"> </span><span style="color:#f4836a">GET</span><span style="color:#ffd700">(</span><span style="color:#eeeeef">request: </span><span style="color:#83ccb4">NextRequest</span><span style="color:#ffd700">)</span><span style="color:#eeeeef"> </span><span style="color:#ffd700">{</span></div>
<div style="position:absolute;right:1374.5px;top:205.24px;font:400 20.5px/20.5px 'Liberation Mono', monospace;white-space:pre;transform:scaleX(0.8226);transform-origin:100% 0;color:#6c6e74">19</div>
<div style="position:absolute;left:726.5px;top:205.24px;font:400 20.5px/20.5px 'Liberation Mono', monospace;white-space:pre;transform:scaleX(0.8226);transform-origin:0 0;color:#eeeeef;-webkit-text-stroke:0.5px currentColor"><span style="color:#eeeeef">                </span><span style="color:#eeeeef">error: </span><span style="color:#f56d5e">&quot;Require parameter: path&quot;</span></div>
<div style="position:absolute;right:1374.5px;top:236.19px;font:400 20.5px/20.5px 'Liberation Mono', monospace;white-space:pre;transform:scaleX(0.8226);transform-origin:100% 0;color:#6c6e74">20</div>
<div style="position:absolute;left:726.5px;top:236.19px;font:400 20.5px/20.5px 'Liberation Mono', monospace;white-space:pre;transform:scaleX(0.8226);transform-origin:0 0;color:#eeeeef;-webkit-text-stroke:0.5px currentColor"><span style="color:#eeeeef">            </span><span style="color:#ffd700">}</span><span style="color:#eeeeef">,</span></div>
<div style="position:absolute;right:1374.5px;top:267.14px;font:400 20.5px/20.5px 'Liberation Mono', monospace;white-space:pre;transform:scaleX(0.8226);transform-origin:100% 0;color:#6c6e74">21</div>
<div style="position:absolute;left:726.5px;top:267.14px;font:400 20.5px/20.5px 'Liberation Mono', monospace;white-space:pre;transform:scaleX(0.8226);transform-origin:0 0;color:#eeeeef;-webkit-text-stroke:0.5px currentColor"><span style="color:#eeeeef">            </span><span style="color:#ffd700">{</span></div>
<div style="position:absolute;right:1374.5px;top:298.09px;font:400 20.5px/20.5px 'Liberation Mono', monospace;white-space:pre;transform:scaleX(0.8226);transform-origin:100% 0;color:#6c6e74">22</div>
<div style="position:absolute;left:726.5px;top:298.09px;font:400 20.5px/20.5px 'Liberation Mono', monospace;white-space:pre;transform:scaleX(0.8226);transform-origin:0 0;color:#eeeeef;-webkit-text-stroke:0.5px currentColor"><span style="color:#eeeeef">                </span><span style="color:#eeeeef">status: </span><span style="color:#a797f0">400</span></div>
<div style="position:absolute;right:1374.5px;top:329.04px;font:400 20.5px/20.5px 'Liberation Mono', monospace;white-space:pre;transform:scaleX(0.8226);transform-origin:100% 0;color:#6c6e74">23</div>
<div style="position:absolute;left:726.5px;top:329.04px;font:400 20.5px/20.5px 'Liberation Mono', monospace;white-space:pre;transform:scaleX(0.8226);transform-origin:0 0;color:#eeeeef;-webkit-text-stroke:0.5px currentColor"><span style="color:#eeeeef">            </span><span style="color:#ffd700">}</span></div>
<div style="position:absolute;right:1374.5px;top:359.99px;font:400 20.5px/20.5px 'Liberation Mono', monospace;white-space:pre;transform:scaleX(0.8226);transform-origin:100% 0;color:#6c6e74">24</div>
<div style="position:absolute;left:726.5px;top:359.99px;font:400 20.5px/20.5px 'Liberation Mono', monospace;white-space:pre;transform:scaleX(0.8226);transform-origin:0 0;color:#eeeeef;-webkit-text-stroke:0.5px currentColor"><span style="color:#eeeeef">        </span><span style="color:#179fff">)</span><span style="color:#eeeeef">;</span></div>
<div style="position:absolute;right:1374.5px;top:390.94px;font:400 20.5px/20.5px 'Liberation Mono', monospace;white-space:pre;transform:scaleX(0.8226);transform-origin:100% 0;color:#6c6e74">25</div>
<div style="position:absolute;left:726.5px;top:390.94px;font:400 20.5px/20.5px 'Liberation Mono', monospace;white-space:pre;transform:scaleX(0.8226);transform-origin:0 0;color:#eeeeef;-webkit-text-stroke:0.5px currentColor"><span style="color:#eeeeef">    </span><span style="color:#da70d6">}</span></div>
<div style="position:absolute;right:1374.5px;top:421.89px;font:400 20.5px/20.5px 'Liberation Mono', monospace;white-space:pre;transform:scaleX(0.8226);transform-origin:100% 0;color:#6c6e74">26</div>
<div style="position:absolute;left:726.5px;top:421.89px;font:400 20.5px/20.5px 'Liberation Mono', monospace;white-space:pre;transform:scaleX(0.8226);transform-origin:0 0;color:#eeeeef;-webkit-text-stroke:0.5px currentColor"><span style="color:#eeeeef">    </span><span style="color:#f383b6">const</span><span style="color:#eeeeef"> filePath = </span><span style="color:#f4836a">atou</span><span style="color:#da70d6">(</span><span style="color:#eeeeef">request.</span><span style="color:#83ccb4">nextUrl</span><span style="color:#eeeeef">.</span><span style="color:#83ccb4">searchParams</span><span style="color:#eeeeef">.</span><span style="color:#f4836a">get</span><span style="color:#179fff">(</span><span style="color:#f56d5e">&quot;path&quot;</span><span style="color:#179fff">)</span><span style="color:#da70d6">)</span><span style="color:#eeeeef">;</span></div>
<div style="position:absolute;right:1374.5px;top:452.84px;font:400 20.5px/20.5px 'Liberation Mono', monospace;white-space:pre;transform:scaleX(0.8226);transform-origin:100% 0;color:#6c6e74">27</div>
<div style="position:absolute;left:726.5px;top:452.84px;font:400 20.5px/20.5px 'Liberation Mono', monospace;white-space:pre;transform:scaleX(0.8226);transform-origin:0 0;color:#eeeeef;-webkit-text-stroke:0.5px currentColor"><span style="color:#eeeeef">    </span><span style="color:#f383b6">if</span><span style="color:#eeeeef"> </span><span style="color:#da70d6">(</span><span style="color:#eeeeef">!fs.</span><span style="color:#f4836a">existsSync</span><span style="color:#179fff">(</span><span style="color:#eeeeef">filePath</span><span style="color:#179fff">)</span><span style="color:#da70d6">)</span><span style="color:#da70d6">{</span></div>
<div style="position:absolute;right:1374.5px;top:483.79px;font:400 20.5px/20.5px 'Liberation Mono', monospace;white-space:pre;transform:scaleX(0.8226);transform-origin:100% 0;color:#6c6e74">28</div>
<div style="position:absolute;left:726.5px;top:483.79px;font:400 20.5px/20.5px 'Liberation Mono', monospace;white-space:pre;transform:scaleX(0.8226);transform-origin:0 0;color:#eeeeef;-webkit-text-stroke:0.5px currentColor"><span style="color:#eeeeef">        </span><span style="color:#f383b6">return</span><span style="color:#eeeeef"> NextResponse.</span><span style="color:#f4836a">json</span><span style="color:#179fff">(</span></div>
<div style="position:absolute;right:1374.5px;top:514.74px;font:400 20.5px/20.5px 'Liberation Mono', monospace;white-space:pre;transform:scaleX(0.8226);transform-origin:100% 0;color:#6c6e74">29</div>
<div style="position:absolute;left:726.5px;top:514.74px;font:400 20.5px/20.5px 'Liberation Mono', monospace;white-space:pre;transform:scaleX(0.8226);transform-origin:0 0;color:#eeeeef;-webkit-text-stroke:0.5px currentColor"><span style="color:#eeeeef">            </span><span style="color:#ffd700">{</span></div>
<div style="position:absolute;right:1374.5px;top:545.69px;font:400 20.5px/20.5px 'Liberation Mono', monospace;white-space:pre;transform:scaleX(0.8226);transform-origin:100% 0;color:#6c6e74">30</div>
<div style="position:absolute;left:726.5px;top:545.69px;font:400 20.5px/20.5px 'Liberation Mono', monospace;white-space:pre;transform:scaleX(0.8226);transform-origin:0 0;color:#eeeeef;-webkit-text-stroke:0.5px currentColor"><span style="color:#eeeeef">                </span><span style="color:#eeeeef">error: </span><span style="color:#f56d5e">&quot;File not found&quot;</span></div>
<div style="position:absolute;right:1374.5px;top:576.64px;font:400 20.5px/20.5px 'Liberation Mono', monospace;white-space:pre;transform:scaleX(0.8226);transform-origin:100% 0;color:#6c6e74">31</div>
<div style="position:absolute;left:726.5px;top:576.64px;font:400 20.5px/20.5px 'Liberation Mono', monospace;white-space:pre;transform:scaleX(0.8226);transform-origin:0 0;color:#eeeeef;-webkit-text-stroke:0.5px currentColor"><span style="color:#eeeeef">            </span><span style="color:#ffd700">}</span><span style="color:#eeeeef">,</span></div>
<div style="position:absolute;right:1374.5px;top:607.59px;font:400 20.5px/20.5px 'Liberation Mono', monospace;white-space:pre;transform:scaleX(0.8226);transform-origin:100% 0;color:#6c6e74">32</div>
<div style="position:absolute;left:726.5px;top:607.59px;font:400 20.5px/20.5px 'Liberation Mono', monospace;white-space:pre;transform:scaleX(0.8226);transform-origin:0 0;color:#eeeeef;-webkit-text-stroke:0.5px currentColor"><span style="color:#eeeeef">            </span><span style="color:#ffd700">{</span></div>
<div style="position:absolute;right:1374.5px;top:638.54px;font:400 20.5px/20.5px 'Liberation Mono', monospace;white-space:pre;transform:scaleX(0.8226);transform-origin:100% 0;color:#6c6e74">33</div>
<div style="position:absolute;left:726.5px;top:638.54px;font:400 20.5px/20.5px 'Liberation Mono', monospace;white-space:pre;transform:scaleX(0.8226);transform-origin:0 0;color:#eeeeef;-webkit-text-stroke:0.5px currentColor"><span style="color:#eeeeef">                </span><span style="color:#eeeeef">status: </span><span style="color:#a797f0">404</span></div>
<div style="position:absolute;right:1374.5px;top:669.49px;font:400 20.5px/20.5px 'Liberation Mono', monospace;white-space:pre;transform:scaleX(0.8226);transform-origin:100% 0;color:#6c6e74">34</div>
<div style="position:absolute;left:726.5px;top:669.49px;font:400 20.5px/20.5px 'Liberation Mono', monospace;white-space:pre;transform:scaleX(0.8226);transform-origin:0 0;color:#eeeeef;-webkit-text-stroke:0.5px currentColor"><span style="color:#eeeeef">            </span><span style="color:#ffd700">}</span></div>
<div style="position:absolute;right:1374.5px;top:700.44px;font:400 20.5px/20.5px 'Liberation Mono', monospace;white-space:pre;transform:scaleX(0.8226);transform-origin:100% 0;color:#6c6e74">35</div>
<div style="position:absolute;left:726.5px;top:700.44px;font:400 20.5px/20.5px 'Liberation Mono', monospace;white-space:pre;transform:scaleX(0.8226);transform-origin:0 0;color:#eeeeef;-webkit-text-stroke:0.5px currentColor"><span style="color:#eeeeef">        </span><span style="color:#179fff">)</span><span style="color:#eeeeef">;</span></div>
<div style="position:absolute;right:1374.5px;top:731.39px;font:400 20.5px/20.5px 'Liberation Mono', monospace;white-space:pre;transform:scaleX(0.8226);transform-origin:100% 0;color:#6c6e74">36</div>
<div style="position:absolute;left:726.5px;top:731.39px;font:400 20.5px/20.5px 'Liberation Mono', monospace;white-space:pre;transform:scaleX(0.8226);transform-origin:0 0;color:#eeeeef;-webkit-text-stroke:0.5px currentColor"><span style="color:#eeeeef">    </span><span style="color:#da70d6">}</span></div>
<div style="position:absolute;right:1374.5px;top:762.34px;font:400 20.5px/20.5px 'Liberation Mono', monospace;white-space:pre;transform:scaleX(0.8226);transform-origin:100% 0;color:#6c6e74">37</div>
<div style="position:absolute;left:726.5px;top:762.34px;font:400 20.5px/20.5px 'Liberation Mono', monospace;white-space:pre;transform:scaleX(0.8226);transform-origin:0 0;color:#eeeeef;-webkit-text-stroke:0.5px currentColor"><span style="color:#eeeeef">    </span><span style="color:#f383b6">let</span><span style="color:#eeeeef"> buffer = fs.</span><span style="color:#f4836a">readFileSync</span><span style="color:#da70d6">(</span><span style="color:#eeeeef">filePath</span><span style="color:#da70d6">)</span><span style="color:#eeeeef">;</span></div>
<div style="position:absolute;right:1374.5px;top:793.29px;font:400 20.5px/20.5px 'Liberation Mono', monospace;white-space:pre;transform:scaleX(0.8226);transform-origin:100% 0;color:#6c6e74">38</div>
<div style="position:absolute;left:726.5px;top:793.29px;font:400 20.5px/20.5px 'Liberation Mono', monospace;white-space:pre;transform:scaleX(0.8226);transform-origin:0 0;color:#eeeeef;-webkit-text-stroke:0.5px currentColor"><span style="color:#eeeeef">    </span><span style="color:#f383b6">let</span><span style="color:#eeeeef"> blob = </span><span style="color:#f383b6">new</span><span style="color:#eeeeef"> </span><span style="color:#f4836a">Blob</span><span style="color:#da70d6">(</span><span style="color:#179fff">[</span><span style="color:#eeeeef">buffer</span><span style="color:#179fff">]</span><span style="color:#da70d6">)</span><span style="color:#eeeeef">;</span></div>
<div style="position:absolute;left:1837.0px;top:167.0px;width:7.199999999999999px;height:1.4px;background:#f383b6;opacity:0.42"></div>
<div style="position:absolute;left:1845.4px;top:167.0px;width:36.0px;height:1.4px;background:#eeeeef;opacity:0.42"></div>
<div style="position:absolute;left:1882.6px;top:167.0px;width:14.399999999999999px;height:1.4px;background:#f56d5e;opacity:0.42"></div>
<div style="position:absolute;left:1837.0px;top:169.85px;width:7.199999999999999px;height:1.4px;background:#f383b6;opacity:0.42"></div>
<div style="position:absolute;left:1845.4px;top:169.85px;width:14.399999999999999px;height:1.4px;background:#eeeeef;opacity:0.42"></div>
<div style="position:absolute;left:1861.0px;top:169.85px;width:14.399999999999999px;height:1.4px;background:#f56d5e;opacity:0.42"></div>
<div style="position:absolute;left:1837.0px;top:172.7px;width:7.199999999999999px;height:1.4px;background:#f383b6;opacity:0.42"></div>
<div style="position:absolute;left:1845.4px;top:172.7px;width:3.5999999999999996px;height:1.4px;background:#eeeeef;opacity:0.42"></div>
<div style="position:absolute;left:1850.2px;top:172.7px;width:9.6px;height:1.4px;background:#eeeeef;opacity:0.42"></div>
<div style="position:absolute;left:1863.4px;top:172.7px;width:7.199999999999999px;height:1.4px;background:#f56d5e;opacity:0.42"></div>
<div style="position:absolute;left:1837.0px;top:178.4px;width:7.199999999999999px;height:1.4px;background:#f383b6;opacity:0.42"></div>
<div style="position:absolute;left:1845.4px;top:178.4px;width:6.0px;height:1.4px;background:#f383b6;opacity:0.42"></div>
<div style="position:absolute;left:1852.6px;top:178.4px;width:9.6px;height:1.4px;background:#f383b6;opacity:0.42"></div>
<div style="position:absolute;left:1863.4px;top:178.4px;width:3.5999999999999996px;height:1.4px;background:#f4836a;opacity:0.42"></div>
<div style="position:absolute;left:1868.2px;top:178.4px;width:26.4px;height:1.4px;background:#83ccb4;opacity:0.42"></div>
<div style="position:absolute;left:1841.8px;top:181.25px;width:2.4px;height:1.4px;background:#f383b6;opacity:0.42"></div>
<div style="position:absolute;left:1845.4px;top:181.25px;width:12.0px;height:1.4px;background:#eeeeef;opacity:0.42"></div>
<div style="position:absolute;left:1858.6px;top:181.25px;width:9.6px;height:1.4px;background:#f4836a;opacity:0.42"></div>
<div style="position:absolute;left:1869.4px;top:181.25px;width:48.0px;height:1.4px;background:#eeeeef;opacity:0.42"></div>
<div style="position:absolute;left:1918.6px;top:181.25px;width:12.0px;height:1.4px;background:#83ccb4;opacity:0.42"></div>
<div style="position:absolute;left:1933.0px;top:181.25px;width:7.199999999999999px;height:1.4px;background:#f56d5e;opacity:0.42"></div>
<div style="position:absolute;left:1846.6px;top:184.1px;width:7.199999999999999px;height:1.4px;background:#f383b6;opacity:0.42"></div>
<div style="position:absolute;left:1855.0px;top:184.1px;width:19.2px;height:1.4px;background:#eeeeef;opacity:0.42"></div>
<div style="position:absolute;left:1851.4px;top:186.95px;width:1.2px;height:1.4px;background:#ffd700;opacity:0.42"></div>
<div style="position:absolute;left:1856.2px;top:189.8px;width:7.199999999999999px;height:1.4px;background:#eeeeef;opacity:0.42"></div>
<div style="position:absolute;left:1864.6px;top:189.8px;width:24.0px;height:1.4px;background:#f56d5e;opacity:0.42"></div>
<div style="position:absolute;left:1851.4px;top:192.65px;width:2.4px;height:1.4px;background:#ffd700;opacity:0.42"></div>
<div style="position:absolute;left:1851.4px;top:195.5px;width:1.2px;height:1.4px;background:#ffd700;opacity:0.42"></div>
<div style="position:absolute;left:1856.2px;top:198.35px;width:8.4px;height:1.4px;background:#eeeeef;opacity:0.42"></div>
<div style="position:absolute;left:1865.8px;top:198.35px;width:3.5999999999999996px;height:1.4px;background:#a797f0;opacity:0.42"></div>
<div style="position:absolute;left:1851.4px;top:201.2px;width:1.2px;height:1.4px;background:#ffd700;opacity:0.42"></div>
<div style="position:absolute;left:1846.6px;top:204.05px;width:2.4px;height:1.4px;background:#179fff;opacity:0.42"></div>
<div style="position:absolute;left:1841.8px;top:206.9px;width:1.2px;height:1.4px;background:#da70d6;opacity:0.42"></div>
<div style="position:absolute;left:1841.8px;top:209.75px;width:6.0px;height:1.4px;background:#f383b6;opacity:0.42"></div>
<div style="position:absolute;left:1849.0px;top:209.75px;width:9.6px;height:1.4px;background:#eeeeef;opacity:0.42"></div>
<div style="position:absolute;left:1859.8px;top:209.75px;width:4.8px;height:1.4px;background:#f4836a;opacity:0.42"></div>
<div style="position:absolute;left:1865.8px;top:209.75px;width:9.6px;height:1.4px;background:#eeeeef;opacity:0.42"></div>
<div style="position:absolute;left:1876.6px;top:209.75px;width:16.8px;height:1.4px;background:#83ccb4;opacity:0.42"></div>
<div style="position:absolute;left:1894.6px;top:209.75px;width:7.199999999999999px;height:1.4px;background:#f56d5e;opacity:0.42"></div>
<div style="position:absolute;left:1841.8px;top:212.6px;width:2.4px;height:1.4px;background:#f383b6;opacity:0.42"></div>
<div style="position:absolute;left:1845.4px;top:212.6px;width:19.2px;height:1.4px;background:#eeeeef;opacity:0.42"></div>
<div style="position:absolute;left:1846.6px;top:215.45px;width:7.199999999999999px;height:1.4px;background:#f383b6;opacity:0.42"></div>
<div style="position:absolute;left:1855.0px;top:215.45px;width:19.2px;height:1.4px;background:#eeeeef;opacity:0.42"></div>
<div style="position:absolute;left:1851.4px;top:218.3px;width:1.2px;height:1.4px;background:#ffd700;opacity:0.42"></div>
<div style="position:absolute;left:1856.2px;top:221.15px;width:8.4px;height:1.4px;background:#eeeeef;opacity:0.42"></div>
<div style="position:absolute;left:1865.8px;top:221.15px;width:28.799999999999997px;height:1.4px;background:#f56d5e;opacity:0.42"></div>
<div style="position:absolute;left:1851.4px;top:224.0px;width:2.4px;height:1.4px;background:#ffd700;opacity:0.42"></div>
<div style="position:absolute;left:1851.4px;top:226.85px;width:1.2px;height:1.4px;background:#ffd700;opacity:0.42"></div>
<div style="position:absolute;left:1856.2px;top:229.7px;width:8.4px;height:1.4px;background:#eeeeef;opacity:0.42"></div>
<div style="position:absolute;left:1865.8px;top:229.7px;width:3.5999999999999996px;height:1.4px;background:#a797f0;opacity:0.42"></div>
<div style="position:absolute;left:1851.4px;top:232.55px;width:1.2px;height:1.4px;background:#ffd700;opacity:0.42"></div>
<div style="position:absolute;left:1846.6px;top:235.4px;width:2.4px;height:1.4px;background:#179fff;opacity:0.42"></div>
<div style="position:absolute;left:1841.8px;top:238.25px;width:1.2px;height:1.4px;background:#da70d6;opacity:0.42"></div>
<div style="position:absolute;left:1841.8px;top:241.10000000000002px;width:6.0px;height:1.4px;background:#f383b6;opacity:0.42"></div>
<div style="position:absolute;left:1849.0px;top:241.10000000000002px;width:9.6px;height:1.4px;background:#eeeeef;opacity:0.42"></div>
<div style="position:absolute;left:1859.8px;top:241.10000000000002px;width:14.399999999999999px;height:1.4px;background:#83ccb4;opacity:0.42"></div>
<div style="position:absolute;left:1875.4px;top:241.10000000000002px;width:7.199999999999999px;height:1.4px;background:#f56d5e;opacity:0.42"></div>
<div style="position:absolute;left:1885.0px;top:241.10000000000002px;width:14.399999999999999px;height:1.4px;background:#83ccb4;opacity:0.42"></div>
<div style="position:absolute;left:1841.8px;top:243.95px;width:6.0px;height:1.4px;background:#f383b6;opacity:0.42"></div>
<div style="position:absolute;left:1849.0px;top:243.95px;width:14.399999999999999px;height:1.4px;background:#eeeeef;opacity:0.42"></div>
<div style="position:absolute;left:1864.6px;top:243.95px;width:12.0px;height:1.4px;background:#f4836a;opacity:0.42"></div>
<div style="position:absolute;left:1841.8px;top:246.8px;width:7.199999999999999px;height:1.4px;background:#f383b6;opacity:0.42"></div>
<div style="position:absolute;left:1850.2px;top:246.8px;width:9.6px;height:1.4px;background:#eeeeef;opacity:0.42"></div>
<div style="position:absolute;left:1861.0px;top:246.8px;width:9.6px;height:1.4px;background:#f4836a;opacity:0.42"></div>
<div style="position:absolute;left:1846.6px;top:249.65px;width:16.8px;height:1.4px;background:#eeeeef;opacity:0.42"></div>
<div style="position:absolute;left:1864.6px;top:249.65px;width:8.4px;height:1.4px;background:#83ccb4;opacity:0.42"></div>
<div style="position:absolute;left:1841.8px;top:252.5px;width:7.199999999999999px;height:1.4px;background:#f383b6;opacity:0.42"></div>
<div style="position:absolute;left:1850.2px;top:252.5px;width:7.199999999999999px;height:1.4px;background:#eeeeef;opacity:0.42"></div>
<div style="position:absolute;left:1858.6px;top:252.5px;width:4.8px;height:1.4px;background:#83ccb4;opacity:0.42"></div>
<div style="position:absolute;left:1846.6px;top:255.35000000000002px;width:16.8px;height:1.4px;background:#eeeeef;opacity:0.42"></div>
<div style="position:absolute;left:1864.6px;top:255.35000000000002px;width:12.0px;height:1.4px;background:#f4836a;opacity:0.42"></div>
<div style="position:absolute;left:1877.8px;top:255.35000000000002px;width:9.6px;height:1.4px;background:#eeeeef;opacity:0.42"></div>
<div style="position:absolute;left:1837.0px;top:258.2px;width:1.2px;height:1.4px;background:#da70d6;opacity:0.42"></div>
<div style="position:absolute;left:1837px;top:171px;width:129px;height:1.6px;background:#c8262a;opacity:0.8"></div>
<div style="position:absolute;left:1837px;top:171px;width:50px;height:1.8px;background:#ff3b3b;"></div>
<div style="position:absolute;left:1966px;top:166px;width:1px;height:652px;background:#3a3b40;"></div>
<div style="position:absolute;left:1967px;top:345px;width:18px;height:220px;background:#4c4d52;opacity:0.9"></div>
<div style="position:absolute;left:1978px;top:176px;width:7px;height:11px;background:#d12b2b;"></div>
<div style="position:absolute;left:1967px;top:575px;width:18px;height:3px;background:#8f9095;"></div>
<div style="position:absolute;left:1973px;top:580px;width:7px;height:7px;background:#17181b;"></div>
<div style="position:absolute;left:639px;top:835.97px;font:400 14.8px/14.8px 'Liberation Sans', sans-serif;color:#e8e8e8;white-space:pre;-webkit-text-stroke:0.3px currentColor;">TERMINAL</div>
<div style="position:absolute;left:637px;top:856.5px;width:80px;height:2px;background:#e0e0e0;"></div>
<div style="position:absolute;left:746px;top:835.97px;font:400 14.8px/14.8px 'Liberation Sans', sans-serif;color:#c8c8c8;white-space:pre;-webkit-text-stroke:0.3px currentColor;">PROBLEMS</div>
<div style="position:absolute;left:839px;top:830.5px;width:25px;height:24px;border-radius:12px;background:#4d4e53;"></div>
<div style="position:absolute;left:351.5px;width:1000px;text-align:center;top:837.15px;font:400 14px/14px 'Liberation Sans', sans-serif;color:#b8b8b8;white-space:pre;-webkit-text-stroke:0.3px currentColor;">1</div>
<div style="position:absolute;left:894px;top:835.97px;font:400 14.8px/14.8px 'Liberation Sans', sans-serif;color:#c8c8c8;white-space:pre;-webkit-text-stroke:0.3px currentColor;">OUTPUT</div>
<div style="position:absolute;left:989px;top:835.97px;font:400 14.8px/14.8px 'Liberation Sans', sans-serif;color:#c8c8c8;white-space:pre;-webkit-text-stroke:0.3px currentColor;">TEST RESULTS</div>
<svg style="position:absolute;left:1820px;top:832px;" width="20" height="20" viewBox="0 0 20 20"><path d="M10 1.5 V18.5 M1.5 10 H18.5" stroke="#bdbdbd" stroke-width="1.6"/></svg>
<svg style="position:absolute;left:1846px;top:837px;" width="12" height="10" viewBox="0 0 12 10"><path d="M1 2.5 L6 7.5 L11 2.5" fill="none" stroke="#bdbdbd" stroke-width="1.3"/></svg>
<div style="position:absolute;left:1874.7px;top:841px;width:2.6px;height:2.6px;background:#bdbdbd;border-radius:50%"></div>
<div style="position:absolute;left:1882.7px;top:841px;width:2.6px;height:2.6px;background:#bdbdbd;border-radius:50%"></div>
<div style="position:absolute;left:1890.7px;top:841px;width:2.6px;height:2.6px;background:#bdbdbd;border-radius:50%"></div>
<svg style="position:absolute;left:1910px;top:834px;" width="18" height="12" viewBox="0 0 18 12"><path d="M2 9.5 L9 2.5 L16 9.5" fill="none" stroke="#bdbdbd" stroke-width="1.5"/></svg>
<svg style="position:absolute;left:1946px;top:834px;" width="16" height="16" viewBox="0 0 16 16"><path d="M2 2 L14 14 M14 2 L2 14" stroke="#bdbdbd" stroke-width="1.5"/></svg>
<div style="position:absolute;left:1823px;top:866px;width:1px;height:349px;background:#3e3f44;"></div>
<div style="position:absolute;left:1825px;top:865px;width:160px;height:29.5px;background:#4d4e53;"></div>
<svg style="position:absolute;left:1837px;top:869px;" width="22" height="21" viewBox="0 0 22 21"><g fill="none" stroke="#e0e0e0" stroke-width="1.5"><rect x="1.5" y="1.5" width="18" height="17.5" rx="1.5"/><path d="M5 6.5 L9.5 10.5 L5 14.5"/><path d="M10.5 14.8 H15.5"/></g></svg>
<div style="position:absolute;left:1864px;top:870.76px;font:400 18px/18px 'Liberation Sans', sans-serif;color:#ffffff;white-space:pre;-webkit-text-stroke:0.3px currentColor;">node</div>
<svg style="position:absolute;left:1838px;top:898px;" width="18" height="20" viewBox="0 0 18 20"><g fill="none" stroke="#c8c8c8" stroke-width="1.4" stroke-linejoin="round"><path d="M5 1.5 H13 M6.5 1.5 V7.5 L1.8 18.5 H16.2 L11.5 7.5 V1.5"/><path d="M4 13.5 H14"/></g></svg>
<div style="position:absolute;left:1864px;top:900.76px;font:400 18px/18px 'Liberation Sans', sans-serif;color:#ffffff;white-space:pre;-webkit-text-stroke:0.3px currentColor;">Jest (spark...</div>
<div style="position:absolute;left:639px;top:886.11px;font:400 18.0px/18.0px 'Liberation Mono', monospace;white-space:pre;transform:scaleX(0.8860);transform-origin:0 0;color:#d0d0d0;-webkit-text-stroke:0.4px currentColor">25 1</div>
<div style="position:absolute;left:639px;top:907.96px;font:400 18.0px/18.0px 'Liberation Mono', monospace;white-space:pre;transform:scaleX(0.8860);transform-origin:0 0;color:#d0d0d0;-webkit-text-stroke:0.4px currentColor">0000185670 00000 n</div>
<div style="position:absolute;left:639px;top:929.81px;font:400 18.0px/18.0px 'Liberation Mono', monospace;white-space:pre;transform:scaleX(0.8860);transform-origin:0 0;color:#d0d0d0;-webkit-text-stroke:0.4px currentColor">67 1</div>
<div style="position:absolute;left:639px;top:951.66px;font:400 18.0px/18.0px 'Liberation Mono', monospace;white-space:pre;transform:scaleX(0.8860);transform-origin:0 0;color:#d0d0d0;-webkit-text-stroke:0.4px currentColor">0000185843 00000 n</div>
<div style="position:absolute;left:639px;top:973.51px;font:400 18.0px/18.0px 'Liberation Mono', monospace;white-space:pre;transform:scaleX(0.8860);transform-origin:0 0;color:#d0d0d0;-webkit-text-stroke:0.4px currentColor">trailer</div>
<div style="position:absolute;left:639px;top:995.36px;font:400 18.0px/18.0px 'Liberation Mono', monospace;white-space:pre;transform:scaleX(0.8860);transform-origin:0 0;color:#d0d0d0;-webkit-text-stroke:0.4px currentColor">&lt;&lt; /ID [&lt;CA1B0A44BD542453BEF918FFCD46DC04&gt;&lt;BC189208EA95ECFC2F1F4B18FD8B1E51&gt; ] /Root 66 0 R /Size 68 /DocChecksum /6F72EA</div>
<div style="position:absolute;left:639px;top:1017.21px;font:400 18.0px/18.0px 'Liberation Mono', monospace;white-space:pre;transform:scaleX(0.8860);transform-origin:0 0;color:#d0d0d0;-webkit-text-stroke:0.4px currentColor">7514DFAD23FABCC7A550021AF7</div>
<div style="position:absolute;left:639px;top:1039.06px;font:400 18.0px/18.0px 'Liberation Mono', monospace;white-space:pre;transform:scaleX(0.8860);transform-origin:0 0;color:#d0d0d0;-webkit-text-stroke:0.4px currentColor">/Prev 182727 /Info 67 0 R &gt;&gt;</div>
<div style="position:absolute;left:639px;top:1060.91px;font:400 18.0px/18.0px 'Liberation Mono', monospace;white-space:pre;transform:scaleX(0.8860);transform-origin:0 0;color:#d0d0d0;-webkit-text-stroke:0.4px currentColor">startxref</div>
<div style="position:absolute;left:639px;top:1082.76px;font:400 18.0px/18.0px 'Liberation Mono', monospace;white-space:pre;transform:scaleX(0.8860);transform-origin:0 0;color:#d0d0d0;-webkit-text-stroke:0.4px currentColor">186062</div>
<div style="position:absolute;left:639px;top:1104.61px;font:400 18.0px/18.0px 'Liberation Mono', monospace;white-space:pre;transform:scaleX(0.8860);transform-origin:0 0;color:#d0d0d0;-webkit-text-stroke:0.4px currentColor">%%EOF</div>
<div style="position:absolute;left:639px;top:1126.46px;font:400 18.0px/18.0px 'Liberation Mono', monospace;white-space:pre;transform:scaleX(0.8860);transform-origin:0 0;color:#d0d0d0;-webkit-text-stroke:0.4px currentColor"></div>
<div style="position:absolute;left:639px;top:1148.31px;font:400 18.0px/18.0px 'Liberation Mono', monospace;white-space:pre;transform:scaleX(0.8860);transform-origin:0 0;color:#d0d0d0;-webkit-text-stroke:0.4px currentColor"> <span style="color:#3fb950">✓</span> Compiled in 426ms (3195 modules)</div>
<div style="position:absolute;left:639px;top:1170.16px;font:400 18.0px/18.0px 'Liberation Mono', monospace;white-space:pre;transform:scaleX(0.8860);transform-origin:0 0;color:#d0d0d0;-webkit-text-stroke:0.4px currentColor"> <span style="color:#3fb950">✓</span> Compiled in 338ms (3195 modules)</div>
<div style="position:absolute;left:639.5px;top:1190px;width:9px;height:21px;background:transparent;border:1.5px solid #e0e0e0"></div>
<svg style="position:absolute;left:79px;top:1218px;" width="20" height="22" viewBox="0 0 20 22"><g fill="none" stroke="#bdbdbd" stroke-width="1.3"><circle cx="6.9" cy="4.2" r="2.3"/><circle cx="6.9" cy="17.1" r="2.3"/><circle cx="15" cy="7.6" r="2.3"/><path d="M6.9 6.5 V14.8 M7.6 14.6 L9.3 12.3 H12.6 L14 9.8"/></g></svg>
<div style="position:absolute;left:104px;top:1220.81px;font:400 17px/17px 'Liberation Sans', sans-serif;color:#bdbdbd;white-space:pre;-webkit-text-stroke:0.3px currentColor;">dev*</div>
<svg style="position:absolute;left:147px;top:1219px;" width="21" height="20" viewBox="0 0 21 20"><g fill="none" stroke="#bdbdbd" stroke-width="1.4"><path d="M3.5 9 A7 7 0 0 1 16.5 7 M17 11 A7 7 0 0 1 4 13"/><path d="M17.5 3 V7.5 H13 M3 17 V12.5 H7.5"/></g></svg>
<div style="position:absolute;left:171px;top:1220.81px;font:400 17px/17px 'Liberation Sans', sans-serif;color:#bdbdbd;white-space:pre;-webkit-text-stroke:0.3px currentColor;">0</div>
<svg style="position:absolute;left:181px;top:1219px;" width="12" height="20" viewBox="0 0 12 20"><path d="M6 2.5 V17 M1.5 12.5 L6 17 L10.5 12.5" fill="none" stroke="#bdbdbd" stroke-width="1.5"/></svg>
<div style="position:absolute;left:197px;top:1220.81px;font:400 17px/17px 'Liberation Sans', sans-serif;color:#bdbdbd;white-space:pre;-webkit-text-stroke:0.3px currentColor;">1</div>
<svg style="position:absolute;left:207px;top:1219px;" width="12" height="20" viewBox="0 0 12 20"><path d="M6 17.5 V3 M1.5 7.5 L6 3 L10.5 7.5" fill="none" stroke="#bdbdbd" stroke-width="1.5"/></svg>
<svg style="position:absolute;left:239px;top:1218px;" width="20" height="22" viewBox="0 0 20 22"><g fill="none" stroke="#bdbdbd" stroke-width="1.3"><circle cx="5" cy="5.3" r="2.5"/><circle cx="5" cy="16.3" r="2.5"/><path d="M5 7.8 V13.8 M9.8 2.5 V19.6 M7.5 16.3 H12.5 Q14.7 16.3 14.7 14 V12.7"/><circle cx="14.7" cy="10.2" r="2.5"/></g></svg>
<svg style="position:absolute;left:280px;top:1218px;" width="22" height="22" viewBox="0 0 22 22"><g fill="none" stroke="#bdbdbd" stroke-width="1.3" stroke-linejoin="round"><path d="M18 3 Q10.5 4 6.3 11.6 L10.4 15.7 Q17 11.5 18 3 Z"/><path d="M7.8 7.6 H2.2 V11.5 L6.3 11.6"/><path d="M10.4 15.7 L10.4 20 H14.2 V13.6"/><path d="M2.2 14.6 V18.5 H5.4"/></g><circle cx="13.3" cy="8.3" r="1.2" fill="#bdbdbd"/></svg>
<svg style="position:absolute;left:299px;top:1218px;" width="22" height="22" viewBox="0 0 22 22"><g fill="none" stroke="#bdbdbd" stroke-width="1.3" stroke-linejoin="round" transform="rotate(-45 11 11)"><path d="M-0.5 11 H2.5"/><path d="M8 7.5 H4.5 Q2.5 7.5 2.5 11 Q2.5 14.5 4.5 14.5 H8 Z"/><path d="M8 9.3 H10 M8 12.7 H10"/><path d="M10.5 7.5 H14 Q16.3 7.5 16.3 11 Q16.3 14.5 14 14.5 H10.5 Z"/><path d="M16.3 11 H19.5"/></g></svg>
<div style="position:absolute;left:322px;top:1220.81px;font:400 17px/17px 'Liberation Sans', sans-serif;color:#bdbdbd;white-space:pre;-webkit-text-stroke:0.3px currentColor;">Launchpad</div>
<svg style="position:absolute;left:428px;top:1219px;" width="20" height="20" viewBox="0 0 20 20"><g fill="none" stroke="#bdbdbd" stroke-width="1.4"><circle cx="10" cy="10" r="7.8"/><path d="M6.8 6.8 L13.2 13.2 M13.2 6.8 L6.8 13.2"/></g></svg>
<div style="position:absolute;left:452px;top:1220.81px;font:400 17px/17px 'Liberation Sans', sans-serif;color:#bdbdbd;white-space:pre;-webkit-text-stroke:0.3px currentColor;">1</div>
<svg style="position:absolute;left:466px;top:1218px;" width="22" height="20" viewBox="0 0 22 20"><g fill="none" stroke="#bdbdbd" stroke-width="1.4" stroke-linejoin="round"><path d="M11 2 L20.5 18.5 H1.5 Z"/><path d="M11 7.5 V13 M11 14.8 V16.3"/></g></svg>
<div style="position:absolute;left:491px;top:1220.81px;font:400 17px/17px 'Liberation Sans', sans-serif;color:#bdbdbd;white-space:pre;-webkit-text-stroke:0.3px currentColor;">0</div>
<svg style="position:absolute;left:520px;top:1218px;" width="22" height="22" viewBox="0 0 22 22"><g fill="none" stroke="#bdbdbd" stroke-width="1.4"><path d="M4.5 6 A8 8 0 1 1 3.2 12"/><path d="M2.5 2.5 V7 H7"/><path d="M11 6.5 V11.5 L14 14"/></g></svg>
<div style="position:absolute;left:546px;top:1220.81px;font:400 17px/17px 'Liberation Sans', sans-serif;color:#bdbdbd;white-space:pre;-webkit-text-stroke:0.3px currentColor;">0 hrs 31 mins</div>
<svg style="position:absolute;left:670px;top:1219px;" width="21" height="19" viewBox="0 0 21 19"><g fill="none" stroke="#bdbdbd" stroke-width="1.4" stroke-linejoin="round"><path d="M2 3 H8 L10 5 H19 V17 H2 Z M2 8 H19"/></g></svg>
<div style="position:absolute;left:696px;top:1220.81px;font:400 17px/17px 'Liberation Sans', sans-serif;color:#bdbdbd;white-space:pre;-webkit-text-stroke:0.3px currentColor;">SparkHome</div>
<div style="position:absolute;right:571px;top:1220.81px;font:400 17px/17px 'Liberation Sans', sans-serif;color:#bdbdbd;white-space:pre;-webkit-text-stroke:0.3px currentColor;">Ln 40, Col 30</div>
<div style="position:absolute;right:474px;top:1220.81px;font:400 17px/17px 'Liberation Sans', sans-serif;color:#bdbdbd;white-space:pre;-webkit-text-stroke:0.3px currentColor;">Spaces: 4</div>
<div style="position:absolute;right:403px;top:1220.81px;font:400 17px/17px 'Liberation Sans', sans-serif;color:#bdbdbd;white-space:pre;-webkit-text-stroke:0.3px currentColor;">UTF-8</div>
<div style="position:absolute;right:362px;top:1220.81px;font:400 17px/17px 'Liberation Sans', sans-serif;color:#bdbdbd;white-space:pre;-webkit-text-stroke:0.3px currentColor;">LF</div>
<svg style="position:absolute;left:1705px;top:1219px;" width="18" height="20" viewBox="0 0 18 20"><g fill="none" stroke="#bdbdbd" stroke-width="1.3"><path d="M5.5 2 Q3 2 3 4.5 V8 Q3 10 1.5 10 Q3 10 3 12 V15.5 Q3 18 5.5 18"/><path d="M12.5 2 Q15 2 15 4.5 V8 Q15 10 16.5 10 Q15 10 15 12 V15.5 Q15 18 12.5 18"/></g></svg>
<div style="position:absolute;right:235px;top:1220.81px;font:400 17px/17px 'Liberation Sans', sans-serif;color:#bdbdbd;white-space:pre;-webkit-text-stroke:0.3px currentColor;">TypeScript</div>
<svg style="position:absolute;left:1833px;top:1220px;" width="18" height="16" viewBox="0 0 18 16"><path d="M2 8.5 L6.5 13 L16 2.5" fill="none" stroke="#bdbdbd" stroke-width="1.4"/></svg>
<div style="position:absolute;right:123px;top:1220.81px;font:400 17px/17px 'Liberation Sans', sans-serif;color:#bdbdbd;white-space:pre;-webkit-text-stroke:0.3px currentColor;">Continue</div>
<svg style="position:absolute;left:1945px;top:1218px;" width="22" height="22" viewBox="0 0 22 22"><g fill="none" stroke="#bdbdbd" stroke-width="1.4"><path d="M11 3 Q5 3 5 10 L4 17 H18 L17 12"/><path d="M9 19 Q11 21 13 19"/></g><circle cx="16" cy="5" r="3.5" fill="#bdbdbd"/></svg>
</div>
</div>
<div style="position:absolute;left:63px;top:43px;width:1922px;height:1201px;border-radius:12px;border:1px solid #5e5e5e;pointer-events:none"></div>
</body></html>
